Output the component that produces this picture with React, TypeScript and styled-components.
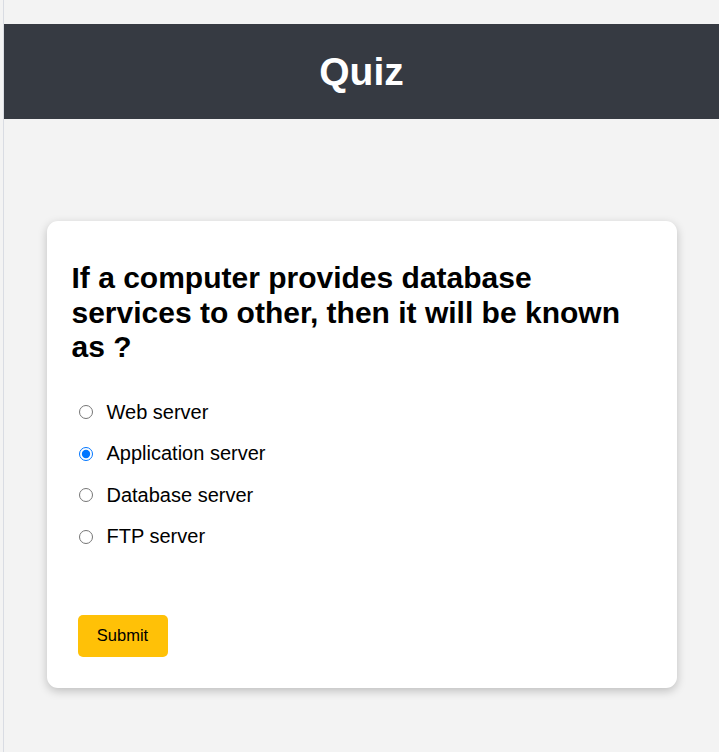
import React, { useState } from "react";
import styled, { createGlobalStyle } from "styled-components";

const Global = createGlobalStyle`
  html, body { margin: 0; padding: 0; background: #f3f3f3; }
  body { font-family: "Liberation Sans", Arial, sans-serif; }
`;

const Page = styled.div`
  margin-left: 3px;
  border-left: 1px solid #d9dce3;
  min-height: 752px;
  padding-top: 24px;
  box-sizing: border-box;
`;

const Header = styled.header`
  background: #363a42;
  height: 95px;
  display: flex;
  align-items: center;
  justify-content: center;
`;

const Title = styled.h1`
  margin: 0;
  color: #ffffff;
  font-size: 39px;
  font-weight: 700;
`;

const Main = styled.main`
  display: flex;
  justify-content: center;
  padding-top: 102px;
`;

const Card = styled.section`
  width: 630px;
  box-sizing: border-box;
  background: #ffffff;
  border-radius: 11px;
  box-shadow: 0 3px 10px rgba(0, 0, 0, 0.22);
  padding: 40px 25px 31px;
`;

const Question = styled.h2`
  margin: 0 0 27px;
  font-size: 30px;
  line-height: 34.5px;
  font-weight: 700;
  color: #000;
`;

const Options = styled.ul`
  list-style: none;
  margin: 0;
  padding: 0 0 0 6px;
`;

const Option = styled.li`
  display: flex;
  align-items: center;
  height: 41.5px;
  font-size: 20px;
  color: #000;
`;

const Radio = styled.input`
  margin: 0 14px 0 1px;
  width: 14px;
  height: 14px;
`;

const Submit = styled.button`
  margin: 57px 0 0 6px;
  width: 90px;
  height: 42px;
  border: none;
  border-radius: 5px;
  background: #ffc107;
  color: #000;
  font-family: "Liberation Sans", Arial, sans-serif;
  font-size: 16.5px;
  cursor: pointer;
`;

const answers = ["Web server", "Application server", "Database server", "FTP server"];

export default function App() {
  const [sel, setSel] = useState(1);
  return (
    <>
      <Global />
      <Page>
        <Header>
          <Title>Quiz</Title>
        </Header>
        <Main>
          <Card>
            <Question>
              If a computer provides database services to other, then it will be known as ?
            </Question>
            <Options>
              {answers.map((a, i) => (
                <Option key={a}>
                  <Radio type="radio" name="q" checked={sel === i} onChange={() => setSel(i)} id={"a" + i} />
                  <label htmlFor={"a" + i}>{a}</label>
                </Option>
              ))}
            </Options>
            <Submit>Submit</Submit>
          </Card>
        </Main>
      </Page>
    </>
  );
}
